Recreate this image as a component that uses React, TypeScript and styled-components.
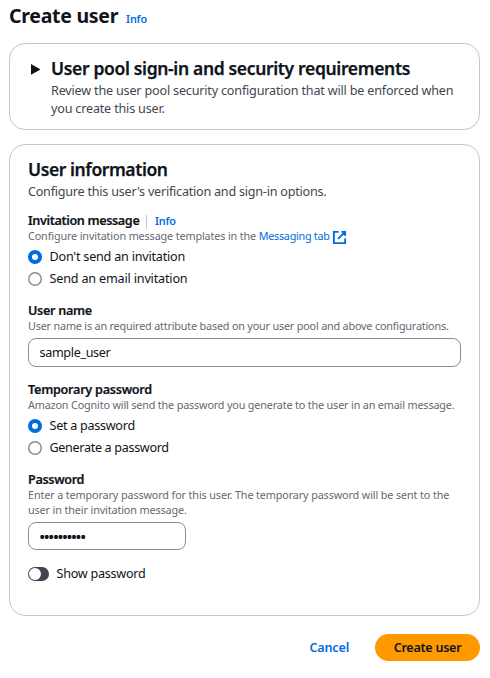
import React, { useState } from 'react';
import styled, { createGlobalStyle } from 'styled-components';

const GlobalStyle = createGlobalStyle`
  * { box-sizing: border-box; }
  body {
    margin: 0;
    background: #fff;
    color: #0f141a;
    font-family: "Noto Sans", sans-serif;
    font-size: 12.6px;
    line-height: 18px;
  }
`;

type Track = { $track?: number };

const Page = styled.main`
  width: 490px;
  height: 678px;
  padding: 4px 10px 0 9px;
  overflow: hidden;
`;

const PageHeader = styled.header`
  display: flex;
  align-items: baseline;
  gap: 8px;
  height: 24px;
  margin-bottom: 15px;
`;

const PageTitle = styled.h1`
  margin: 0;
  font-size: 19.5px;
  font-weight: 700;
  line-height: 24px;
  letter-spacing: -0.28px;
  white-space: nowrap;
`;

const InfoLink = styled.a`
  color: #006ce0;
  font-size: 10.8px;
  font-weight: 600;
  line-height: 16px;
  letter-spacing: -0.2px;
`;

const Panel = styled.section`
  border: 1px solid #c6c6cd;
  border-radius: 16px;
  background: #fff;
`;

const RequirementsPanel = styled(Panel)`
  display: flex;
  height: 87px;
  padding: 13px 18px 0 21px;
  margin-bottom: 14px;
`;

const Caret = styled.svg`
  flex: none;
  width: 10px;
  height: 12px;
  margin: 6px 10px 0 0;
`;

const InformationPanel = styled(Panel)`
  height: 472px;
  padding: 13px 18px 0;
`;

const Title = styled.h2<Track>`
  margin: 0 0 3px;
  font-size: 17.5px;
  font-weight: 600;
  line-height: 22px;
  letter-spacing: ${(p) => p.$track}px;
  white-space: nowrap;
  -webkit-text-stroke: 0.25px currentColor;
`;

const Description = styled.p<Track>`
  margin: 0;
  color: #424650;
  letter-spacing: ${(p) => p.$track}px;
`;

const Field = styled.div<{ $gap: number }>`
  margin-top: ${(p) => p.$gap}px;
`;

const LabelRow = styled.div`
  display: flex;
  align-items: baseline;
  height: 16px;
  padding-top: 1px;
`;

const Label = styled.label<Track>`
  font-weight: 600;
  line-height: 16px;
  letter-spacing: ${(p) => p.$track}px;
  -webkit-text-stroke: 0.2px currentColor;
`;

const Divider = styled.span`
  align-self: center;
  width: 1px;
  height: 14px;
  margin: 2px 8px 0 6.5px;
  background: #c6c6cd;
`;

const Help = styled.p<Track>`
  margin: 0;
  color: #656871;
  font-size: 10.8px;
  line-height: 15px;
  letter-spacing: ${(p) => p.$track}px;
  white-space: nowrap;
`;

const HelpRow = styled.div`
  display: flex;
  align-items: center;
  gap: 2px;
  height: 15px;
`;

const HelpLink = styled.a`
  color: #006ce0;
  letter-spacing: -0.28px;
`;

const ExternalIcon = styled.svg`
  flex: none;
  width: 15px;
  height: 15px;
  margin-top: 4px;
`;

const Options = styled.div`
  display: flex;
  flex-direction: column;
  gap: 4px;
  margin-top: 5px;
`;

const Option = styled.label<Track>`
  display: flex;
  align-items: center;
  gap: 7.5px;
  height: 18px;
  letter-spacing: ${(p) => p.$track}px;
`;

const Radio = styled.input.attrs({ type: 'radio' })`
  appearance: none;
  flex: none;
  width: 14px;
  height: 14px;
  margin: 0;
  border: 0;
  border-radius: 50%;
  background: #fff;
  box-shadow: inset 0 0 0 ${(p) => (p.checked ? '4px #006ce0' : '1.5px #8c8c94')};
`;

const TextInput = styled.input<{ $width: number; $height: number } & Track>`
  display: block;
  width: ${(p) => p.$width}px;
  height: ${(p) => p.$height}px;
  margin: 5px 0 0;
  padding: 0 11px 1px 10.5px;
  border: 1px solid #8c8c94;
  border-radius: 8px;
  outline: none;
  background: #fff;
  color: #0f141a;
  font: inherit;
  letter-spacing: ${(p) => p.$track}px;

  &[type='password'] {
    padding: 0 10px;
    font-size: 17px;
    letter-spacing: -1.85px;
  }
`;

const ToggleRow = styled.label`
  display: flex;
  align-items: center;
  gap: 7.5px;
  height: 18px;
  margin-top: 15px;
  letter-spacing: -0.26px;
`;

const Toggle = styled.button<{ $on: boolean }>`
  display: flex;
  justify-content: ${(p) => (p.$on ? 'flex-end' : 'flex-start')};
  width: 21px;
  height: 14px;
  margin: 0;
  padding: 1px;
  border: 0;
  border-radius: 7px;
  background: ${(p) => (p.$on ? '#006ce0' : '#424650')};
`;

const Knob = styled.span`
  width: 12px;
  height: 12px;
  border-radius: 50%;
  background: #fff;
`;

const Actions = styled.footer`
  display: flex;
  justify-content: flex-end;
  align-items: center;
  gap: 26px;
  margin-top: 18px;
`;

const CancelButton = styled.button`
  padding: 0;
  border: 0;
  background: none;
  color: #006ce0;
  font: inherit;
  font-weight: 600;
  letter-spacing: -0.2px;
`;

const SubmitButton = styled.button`
  width: 105px;
  height: 27px;
  padding: 0;
  border: 0;
  border-radius: 14px;
  background: #ff9900;
  color: #0f141a;
  font: inherit;
  font-weight: 600;
  letter-spacing: -0.28px;
`;

export default function App() {
  const [invite, setInvite] = useState('none');
  const [mode, setMode] = useState('set');
  const [show, setShow] = useState(false);
  const [name, setName] = useState('sample_user');
  const [password, setPassword] = useState('Passw0rd!1');

  return (
    <>
      <GlobalStyle />
      <Page>
        <PageHeader>
          <PageTitle>Create user</PageTitle>
          <InfoLink>Info</InfoLink>
        </PageHeader>

        <RequirementsPanel>
          <Caret viewBox="0 0 10 12">
            <path d="M0 1 9.5 6.4 0 11.8Z" fill="#0f141a" />
          </Caret>
          <div>
            <Title $track={-0.34}>User pool sign-in and security requirements</Title>
            <Description $track={-0.187}>
              Review the user pool security configuration that will be enforced when
              <br />
              you create this user.
            </Description>
          </div>
        </RequirementsPanel>

        <InformationPanel>
          <Title $track={-0.41}>User information</Title>
          <Description $track={-0.233}>Configure this user's verification and sign-in options.</Description>

          <Field $gap={11}>
            <LabelRow>
              <Label $track={-0.36}>Invitation message</Label>
              <Divider />
              <InfoLink>Info</InfoLink>
            </LabelRow>
            <HelpRow>
              <Help $track={-0.13}>
                Configure invitation message templates in the <HelpLink>Messaging tab</HelpLink>
              </Help>
              <ExternalIcon viewBox="0 0 16 16" fill="none" stroke="#006ce0" strokeWidth="2">
                <path d="M10 2h4v4M6.5 9.5 14 2M14 9.05V14H2V2h5" />
              </ExternalIcon>
            </HelpRow>
            <Options>
              <Option $track={-0.217}>
                <Radio name="invite" checked={invite === 'none'} onChange={() => setInvite('none')} />
                Don't send an invitation
              </Option>
              <Option $track={-0.175}>
                <Radio name="invite" checked={invite === 'email'} onChange={() => setInvite('email')} />
                Send an email invitation
              </Option>
            </Options>
          </Field>

          <Field $gap={14}>
            <LabelRow>
              <Label $track={-0.3}>User name</Label>
            </LabelRow>
            <Help $track={-0.18}>
              User name is an required attribute based on your user pool and above configurations.
            </Help>
            <TextInput
              $width={433}
              $height={29}
              $track={-0.34}
              value={name}
              onChange={(e) => setName(e.target.value)}
            />
          </Field>

          <Field $gap={14}>
            <LabelRow>
              <Label $track={-0.26}>Temporary password</Label>
            </LabelRow>
            <Help $track={-0.16}>
              Amazon Cognito will send the password you generate to the user in an email message.
            </Help>
            <Options>
              <Option $track={-0.28}>
                <Radio name="mode" checked={mode === 'set'} onChange={() => setMode('set')} />
                Set a password
              </Option>
              <Option $track={-0.33}>
                <Radio name="mode" checked={mode === 'generate'} onChange={() => setMode('generate')} />
                Generate a password
              </Option>
            </Options>
          </Field>

          <Field $gap={14}>
            <LabelRow>
              <Label $track={-0.34}>Password</Label>
            </LabelRow>
            <Help $track={-0.122}>
              Enter a temporary password for this user. The temporary password will be sent to the
              <br />
              user in their invitation message.
            </Help>
            <TextInput
              type={show ? 'text' : 'password'}
              $width={158}
              $height={28}
              value={password}
              onChange={(e) => setPassword(e.target.value)}
            />
          </Field>

          <ToggleRow>
            <Toggle type="button" $on={show} onClick={() => setShow(!show)}>
              <Knob />
            </Toggle>
            Show password
          </ToggleRow>
        </InformationPanel>

        <Actions>
          <CancelButton>Cancel</CancelButton>
          <SubmitButton>Create user</SubmitButton>
        </Actions>
      </Page>
    </>
  );
}
